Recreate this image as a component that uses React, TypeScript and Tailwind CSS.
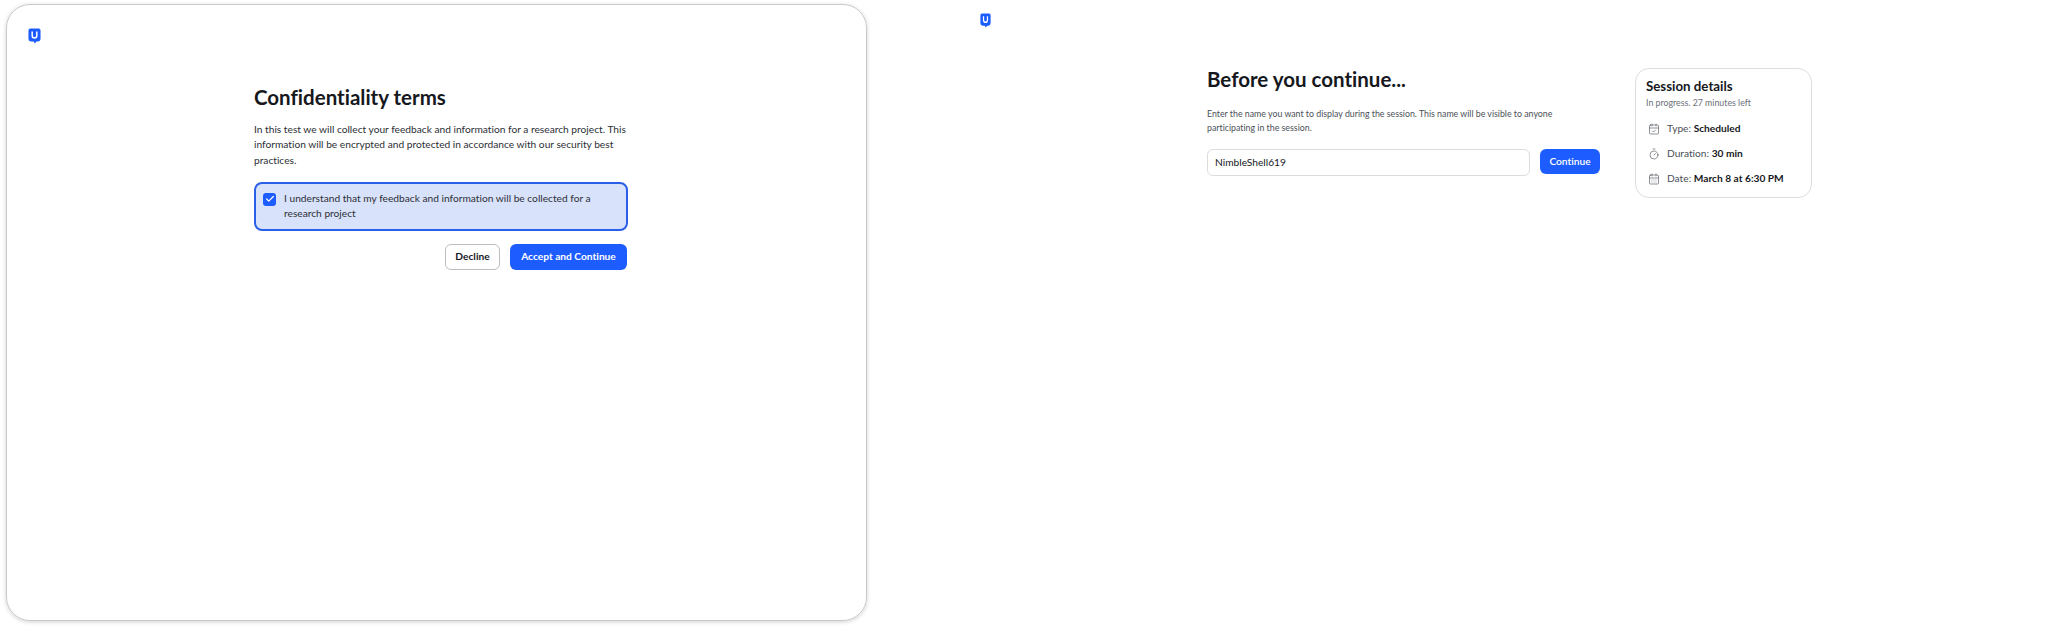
import type { ReactNode } from "react";
import { CalendarCheck, CalendarDays, Check, Timer } from "lucide-react";

const FONT = "font-['Lato','Liberation_Sans',sans-serif] [font-variant-ligatures:none]";

function Logo({ width, height }: { width: number; height: number }) {
  return (
    <svg width={width} height={height} viewBox="0 0 14 16" preserveAspectRatio="none" aria-hidden="true">
      <path
        d="M2.500 0.500h9a2 2 0 0 1 2 2v8a3 3 0 0 1-3 3H9l-1.500 2-1.500-2H3.500a3 3 0 0 1-3-3v-8a2 2 0 0 1 2-2z"
        fill="#1d5cff"
      />
      <path d="M4.500 3.500v4a2.500 2.500 0 0 0 5 0v-4" fill="none" stroke="#fff" strokeWidth="1.600" />
    </svg>
  );
}

function DetailRow({ icon, label, value }: { icon: ReactNode; label: string; value: string }) {
  return (
    <div className="flex h-[25px] items-center gap-[6px]">
      <span className="flex w-[14px] justify-center text-[#4f545c]">{icon}</span>
      <span className="whitespace-nowrap text-[10.200px] text-[#4a4f57]">
        {label}: <b className="font-bold text-[#16181d]">{value}</b>
      </span>
    </div>
  );
}

export default function App() {
  return (
    <div className={`${FONT} flex h-[630px] w-[2048px] overflow-hidden bg-white text-[#16181d]`}>
      {/* consentimento */}
      <section className="ml-[6px] mt-[4px] h-[617px] w-[861px] shrink-0 rounded-[24px] border border-[#c9c9c9] pl-[21px] pt-[23px] shadow-[0_1px_4px_rgba(0,0,0,0.18)]">
        <Logo width={13} height={16} />
        <div className="ml-[226px] mt-[39px] w-[374px]">
          <h1 className="text-[20.500px] font-bold leading-[28px]">Confidentiality terms</h1>
          <p className="mt-[11px] w-[372px] text-[10.200px] leading-[15.300px] text-[#2c2f35]">
            In this test we will collect your feedback and information for a research project. This information will be encrypted and protected in accordance with our security best practices.
          </p>
          <label className="mt-[14px] flex h-[49px] items-start gap-[8px] rounded-[8px] border-2 border-[#2a5fe8] bg-[#d9e2fb] pl-[7px] pr-[24px] pt-[7px]">
            <span className="mt-[2px] flex h-[13px] w-[13px] shrink-0 items-center justify-center rounded-[3px] bg-[#1d5cff] text-white">
              <Check size={10} strokeWidth={3} />
            </span>
            <span className="text-[10.200px] leading-[15.300px] text-[#2c2f35]">
              I understand that my feedback and information will be collected for a research project
            </span>
          </label>
          <div className="mt-[13px] flex justify-end gap-[10px] pr-[1px]">
            <button className="h-[26px] w-[55px] rounded-[6px] border border-[#bdbdbd] bg-white text-[10.200px] font-bold">Decline</button>
            <button className="h-[26px] w-[117px] rounded-[6px] bg-[#1d5cff] text-[10.200px] font-bold text-white">Accept and Continue</button>
          </div>
        </div>
      </section>

      {/* entrada na sessão */}
      <section className="ml-[113px] flex-1 pt-[13px]">
        <Logo width={11} height={15} />
        <div className="ml-[227px] mt-[37px] flex items-start">
          <div className="w-[393px]">
            <h2 className="text-[20.500px] font-bold leading-[28px]">Before you continue...</h2>
            <p className="mt-[14px] text-[8.800px] leading-[13.500px] text-[#4a4f57]">
              Enter the name you want to display during the session. This name will be visible to anyone participating in the session.
            </p>
            <div className="mt-[15px] flex gap-[10px]">
              <div className="flex h-[27px] w-[323px] items-center rounded-[6px] border border-[#dcdcdc] px-[7px] text-[10.200px]">NimbleShell619</div>
              <button className="h-[25px] w-[60px] rounded-[6px] bg-[#1d5cff] text-[10.200px] font-semibold text-white">Continue</button>
            </div>
          </div>
          <aside className="ml-[35px] mt-[3px] h-[130px] w-[177px] rounded-[14px] border border-[#dedede] px-[10px] pt-[8px]">
            <h3 className="text-[13.300px] font-bold leading-[18px]">Session details</h3>
            <p className="mt-[2px] text-[8.800px] leading-[12px] text-[#6b7079]">In progress. 27 minutes left</p>
            <div className="ml-[1px] mt-[7px]">
              <DetailRow icon={<CalendarCheck size={12} strokeWidth={1.250} />} label="Type" value="Scheduled" />
              <DetailRow icon={<Timer size={12} strokeWidth={1.250} />} label="Duration" value="30 min" />
              <DetailRow icon={<CalendarDays size={12} strokeWidth={1.250} />} label="Date" value="March 8 at 6:30 PM" />
            </div>
          </aside>
        </div>
      </section>
    </div>
  );
}
